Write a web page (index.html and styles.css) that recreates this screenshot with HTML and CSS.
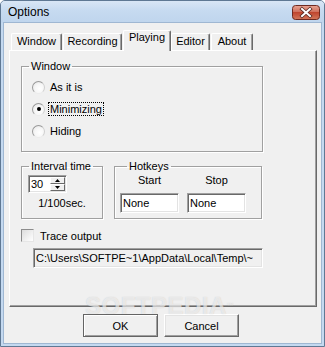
FILE: index.html
```html
<!DOCTYPE html>
<html>
<head>
<meta charset="utf-8">
<link rel="stylesheet" href="styles.css">
</head>
<body>
<div class="window">
  <div class="titlebar">
    <span class="title">Options</span>
    <span class="close">
      <svg width="28" height="15" viewBox="0 0 28 15">
        <defs>
          <linearGradient id="cg" x1="0" y1="0" x2="0" y2="1">
            <stop offset="0" stop-color="#e8a493"/>
            <stop offset="0.45" stop-color="#d0715d"/>
            <stop offset="0.5" stop-color="#c0462f"/>
            <stop offset="1" stop-color="#d3775a"/>
          </linearGradient>
        </defs>
        <rect x="0.5" y="0.5" width="27" height="14" rx="3" fill="url(#cg)" stroke="#6e2a20"/>
        <path d="M10 4 L18 11 M18 4 L10 11" stroke="#5a2a22" stroke-width="3.6" stroke-linecap="square"/>
        <path d="M10 4 L18 11 M18 4 L10 11" stroke="#ffffff" stroke-width="2" stroke-linecap="square"/>
      </svg>
    </span>
  </div>
  <div class="client">
    <div class="tabs">
      <div class="tab w-window">Window</div>
      <div class="tab w-rec">Recording</div>
      <div class="tab w-play sel">Playing</div>
      <div class="tab w-edit">Editor</div>
      <div class="tab w-about">About</div>
    </div>
    <div class="panel">
      <fieldset class="group g-window">
        <legend>Window</legend>
        <div class="radio-row"><span class="radio"></span><span class="lbl">As it is</span></div>
        <div class="radio-row"><span class="radio on"></span><span class="lbl focus">Minimizing</span></div>
        <div class="radio-row"><span class="radio"></span><span class="lbl">Hiding</span></div>
      </fieldset>
      <div class="row2">
        <fieldset class="group g-interval">
          <legend>Interval time</legend>
          <div class="spin">
            <span class="spin-val">30</span>
            <span class="spin-btns">
              <span class="sb"><svg width="5" height="3" viewBox="0 0 5 3"><path d="M2.5 0 L5 3 L0 3 Z" fill="#000"/></svg></span>
              <span class="sb"><svg width="5" height="3" viewBox="0 0 5 3"><path d="M0 0 L5 0 L2.5 3 Z" fill="#000"/></svg></span>
            </span>
          </div>
          <div class="unit">1/100sec.</div>
        </fieldset>
        <fieldset class="group g-hotkeys">
          <legend>Hotkeys</legend>
          <div class="hk-cols">
            <div class="hk-col"><div class="hk-label">Start</div><div class="edit hk-edit">None</div></div>
            <div class="hk-col"><div class="hk-label">Stop</div><div class="edit hk-edit">None</div></div>
          </div>
        </fieldset>
      </div>
      <div class="check-row"><span class="checkbox"></span><span class="lbl">Trace output</span></div>
      <div class="edit path">C:\Users\SOFTPE~1\AppData\Local\Temp\~</div>
    </div>
    <div class="buttons">
      <div class="btn default">OK</div>
      <div class="btn">Cancel</div>
    </div>
  </div>
  <div class="watermark">
    <div class="wm-big">SOFTPEDIA<sup>™</sup></div>
  </div>
</div>
</body>
</html>
```
FILE: styles.css
```css
html, body {
  margin: 0;
  padding: 0;
  background: #ffffff;
}
body {
  font-family: "Liberation Sans", Arial, sans-serif;
  font-size: 11px;
  color: #000;
}
.window {
  position: relative;
  width: 325px;
  height: 347px;
  box-sizing: border-box;
  border: 1px solid #5f7893;
  border-radius: 5px 5px 0 0;
  background: #c4d9f0;
  display: flex;
  flex-direction: column;
  overflow: hidden;
}
.titlebar {
  height: 22px;
  flex: none;
  display: flex;
  align-items: center;
  justify-content: space-between;
  padding: 0 4px 0 7px;
  background: linear-gradient(#d9e6f5, #c6daf0 45%, #bfd5ed);
}
.title {
  font-size: 12px;
  color: #000;
  line-height: 14px;
}
.close {
  display: flex;
  width: 28px;
  height: 15px;
}
.client {
  flex: 1;
  margin: 0 3px 3px 3px;
  background: #f0f0f0;
  padding-top: 7px;
  box-shadow: 0 0 0 1px #9fb7d2;
}
.tabs {
  display: flex;
  align-items: flex-end;
  height: 20px;
  margin-left: 7px;
}
.tab {
  height: 17px;
  box-sizing: border-box;
  border-top: 1px solid #ffffff;
  border-left: 1px solid #ffffff;
  border-right: 1px solid #696969;
  box-shadow: inset -1px 0 0 #a0a0a0;
  border-radius: 2px 2px 0 0;
  text-align: center;
  line-height: 13px;
  padding-top: 1px;
  white-space: nowrap;
}
.w-window { width: 51px; }
.w-rec { width: 59px; margin-left: 1px; }
.w-play { width: 48px; margin-left: 1px; }
.w-edit { width: 39px; }
.w-about { width: 42px; margin-left: 1px; }
.tab.sel {
  position: relative;
  z-index: 1;
  height: 21px;
  margin-bottom: -1px;
  background: #f0f0f0;
  padding-top: 0;
}
.panel {
  margin-left: 5px;
  width: 308px;
  height: 257px;
  box-sizing: border-box;
  border: 1px solid;
  border-color: #ffffff #696969 #696969 #ffffff;
  box-shadow: inset -1px -1px 0 #a0a0a0;
  padding: 9px 0 0 11px;
}
.group {
  margin: 0;
  padding: 0;
  min-width: 0;
  box-sizing: border-box;
  border: 1px solid #a0a0a0;
  box-shadow: inset 1px 1px 0 #ffffff, 1px 1px 0 #ffffff;
}
.group legend {
  padding: 0 2px;
  margin-left: 7px;
  line-height: 13px;
}
.g-window {
  width: 242px;
  padding-top: 3px;
  padding-bottom: 9px;
}
.radio-row {
  height: 22px;
  display: flex;
  align-items: center;
  margin-left: 10px;
}
.radio {
  width: 13px;
  height: 13px;
  box-sizing: border-box;
  border-radius: 50%;
  border: 1px solid;
  border-color: #9a9a9a #cfcfcf #ececec #9a9a9a;
  background: radial-gradient(circle at 60% 60%, #ffffff 0%, #f6f6f6 50%, #e0e0e0 100%);
  display: flex;
  align-items: center;
  justify-content: center;
  margin-right: 4px;
}
.radio.on::after {
  content: "";
  width: 4px;
  height: 4px;
  border-radius: 50%;
  background: #000;
}
.lbl {
  line-height: 12px;
  padding: 0 1px;
}
.lbl.focus {
  outline: 1px dotted #000;
  outline-offset: 0;
}
.row2 {
  display: flex;
  margin-top: 8px;
}
.g-interval {
  width: 82px;
  padding-top: 2px;
  padding-bottom: 8px;
}
.spin {
  margin-left: 6px;
  width: 39px;
  height: 18px;
  box-sizing: border-box;
  border: 1px solid;
  border-color: #a0a0a0 #ffffff #ffffff #a0a0a0;
  box-shadow: inset 1px 1px 0 #696969, inset -1px -1px 0 #e3e3e3;
  background: #ffffff;
  display: flex;
  justify-content: space-between;
  padding: 1px 1px 1px 2px;
}
.spin-val {
  font-size: 11px;
  line-height: 14px;
}
.spin-btns {
  display: flex;
  flex-direction: column;
  width: 15px;
}
.sb {
  flex: 1;
  box-sizing: border-box;
  background: #f0f0f0;
  border: 1px solid;
  border-color: #ffffff #696969 #696969 #ffffff;
  display: flex;
  align-items: center;
  justify-content: center;
}
.unit {
  margin-top: 4px;
  text-align: center;
  line-height: 13px;
}
.g-hotkeys {
  width: 148px;
  margin-left: 11px;
  padding: 1px 0 5px 5px;
}
.hk-cols {
  display: flex;
  gap: 8px;
}
.hk-col {
  width: 59px;
  display: flex;
  flex-direction: column;
  align-items: center;
}
.hk-label {
  line-height: 13px;
  margin-bottom: 6px;
}
.edit {
  box-sizing: border-box;
  border: 1px solid;
  border-color: #a0a0a0 #ffffff #ffffff #a0a0a0;
  box-shadow: inset 1px 1px 0 #696969, inset -1px -1px 0 #e3e3e3;
  background: #ffffff;
  padding-left: 2px;
  white-space: nowrap;
  overflow: hidden;
}
.hk-edit {
  width: 59px;
  height: 20px;
  line-height: 18px;
  font-size: 11px;
}
.check-row {
  display: flex;
  align-items: center;
  height: 13px;
  margin-top: 10px;
}
.checkbox {
  width: 13px;
  height: 13px;
  box-sizing: border-box;
  border: 1px solid;
  border-color: #8c8c8c #e6e6e6 #e6e6e6 #8c8c8c;
  background: linear-gradient(135deg, #dcdcdc, #ffffff);
  margin-right: 6px;
}
.check-row .lbl {
  font-size: 11px;
  padding: 0;
}
.path {
  margin-top: 6px;
  margin-left: 12px;
  width: 230px;
  height: 20px;
  line-height: 18px;
  background: #f0f0f0;
  font-size: 11px;
}
.buttons {
  display: flex;
  gap: 6px;
  margin-top: 7px;
  margin-left: 79px;
}
.btn {
  width: 75px;
  height: 23px;
  box-sizing: border-box;
  border: 1px solid;
  border-color: #ffffff #696969 #696969 #ffffff;
  box-shadow: inset -1px -1px 0 #a0a0a0, inset 1px 1px 0 #e3e3e3;
  background: #f0f0f0;
  display: flex;
  align-items: center;
  justify-content: center;
  font-size: 11px;
}
.btn.default {
  border-color: #646464;
  box-shadow: inset 1px 1px 0 #ffffff, inset -1px -1px 0 #a0a0a0;
}
.watermark {
  position: absolute;
  left: 84px;
  top: 291px;
  width: 140px;
  pointer-events: none;
  text-align: center;
}
.wm-big {
  font-family: "Liberation Sans", Arial, sans-serif;
  font-weight: bold;
  font-size: 24px;
  line-height: 28px;
  letter-spacing: 0.5px;
  color: rgba(255, 255, 255, 0.6);
  text-shadow: 0 0 1px rgba(120, 120, 120, 0.35);
}
.wm-big sup {
  font-size: 7px;
  vertical-align: top;
}
```
